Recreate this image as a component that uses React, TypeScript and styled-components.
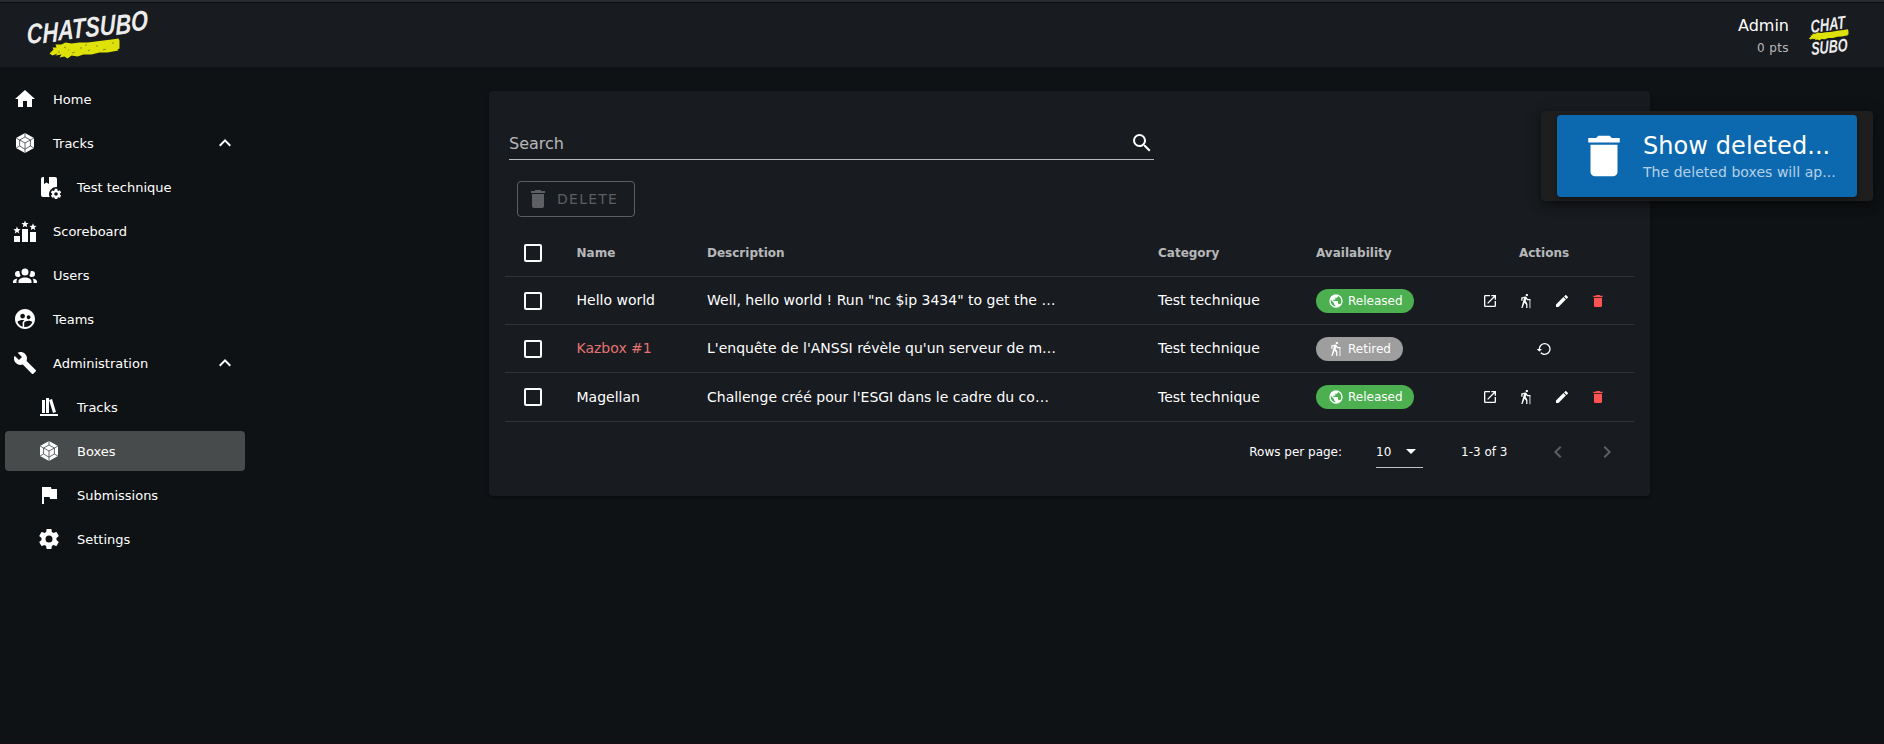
import React from "react";
import styled, { createGlobalStyle } from "styled-components";
import { MdSupervisedUserCircle } from "react-icons/md";

const GlobalStyle = createGlobalStyle`
  * { box-sizing: border-box; }
  html, body { margin: 0; background: #0f1214; }
  body {
    font-family: "DejaVu Sans", sans-serif;
    color: #fff;
    overflow: hidden;
  }
  svg { display: block; flex: none; }
`;

const paths = {
  home: "M10,20V14H14V20H19V12H22L12,3L2,12H5V20H10Z",
  chevronUp: "M7.41,15.41L12,10.83L16.59,15.41L18,14L12,8L6,14L7.41,15.41Z",
  chevronLeft: "M15.41,16.58L10.83,12L15.41,7.41L14,6L8,12L14,18L15.41,16.58Z",
  chevronRight: "M8.59,16.58L13.17,12L8.59,7.41L10,6L16,12L10,18L8.59,16.58Z",
  group:
    "M12,5.5A3.5,3.5 0 0,1 15.5,9A3.5,3.5 0 0,1 12,12.5A3.5,3.5 0 0,1 8.5,9A3.5,3.5 0 0,1 12,5.5M5,8C5.56,8 6.08,8.15 6.53,8.42C6.38,9.85 6.8,11.27 7.66,12.38C7.16,13.34 6.16,14 5,14A3,3 0 0,1 2,11A3,3 0 0,1 5,8M19,8A3,3 0 0,1 22,11A3,3 0 0,1 19,14C17.84,14 16.84,13.34 16.34,12.38C17.2,11.27 17.62,9.85 17.47,8.42C17.92,8.15 18.44,8 19,8M5.5,18.25C5.5,16.18 8.41,14.5 12,14.5C15.59,14.5 18.5,16.18 18.5,18.25V20H5.5V18.25M0,20V18.5C0,17.11 1.89,15.94 4.45,15.6C3.86,16.28 3.5,17.22 3.5,18.25V20H0M24,20H20.5V18.25C20.5,17.22 20.14,16.28 19.55,15.6C22.11,15.94 24,17.11 24,18.5V20Z",
  magnify:
    "M9.5,3A6.5,6.5 0 0,1 16,9.5C16,11.11 15.41,12.59 14.44,13.73L14.71,14H15.5L20.5,19L19,20.5L14,15.5V14.71L13.73,14.44C12.59,15.41 11.11,16 9.5,16A6.5,6.5 0 0,1 3,9.5A6.5,6.5 0 0,1 9.5,3M9.5,5C7,5 5,7 5,9.5C5,12 7,14 9.5,14C12,14 14,12 14,9.5C14,7 12,5 9.5,5Z",
  trash:
    "M19,4H15.5L14.5,3H9.5L8.5,4H5V6H19M6,19A2,2 0 0,0 8,21H16A2,2 0 0,0 18,19V7H6V19Z",
  checkbox:
    "M19,3H5C3.89,3 3,3.89 3,5V19A2,2 0 0,0 5,21H19A2,2 0 0,0 21,19V5C21,3.89 20.1,3 19,3M19,5V19H5V5H19Z",
  open:
    "M14,3V5H17.59L7.76,14.83L9.17,16.24L19,6.41V10H21V3M19,19H5V5H12V3H5C3.89,3 3,3.9 3,5V19A2,2 0 0,0 5,21H19A2,2 0 0,0 21,19V12H19V19Z",
  pencil:
    "M20.71,7.04C21.1,6.65 21.1,6 20.71,5.63L18.37,3.29C18,2.9 17.35,2.9 16.96,3.29L15.12,5.12L18.87,8.87M3,17.25V21H6.75L17.81,9.93L14.06,6.18L3,17.25Z",
  earth:
    "M17.9,17.39C17.64,16.59 16.89,16 16,16H15V13A1,1 0 0,0 14,12H8V10H10A1,1 0 0,0 11,9V7H13A2,2 0 0,0 15,5V4.59C17.93,5.77 20,8.64 20,12C20,14.08 19.2,15.97 17.9,17.39M11,19.93C7.05,19.44 4,16.08 4,12C4,11.38 4.08,10.78 4.21,10.21L9,15V16A2,2 0 0,0 11,18M12,2A10,10 0 0,0 2,12A10,10 0 0,0 12,22A10,10 0 0,0 22,12A10,10 0 0,0 12,2Z",
  flag: "M14.4,6L14,4H5V21H7V14H12.6L13,16H20V6H14.4Z",
  cog:
    "M12,15.5A3.5,3.5 0 0,1 8.5,12A3.5,3.5 0 0,1 12,8.5A3.5,3.5 0 0,1 15.5,12A3.5,3.5 0 0,1 12,15.5M19.43,12.97C19.47,12.65 19.5,12.33 19.5,12C19.5,11.67 19.47,11.34 19.43,11L21.54,9.37C21.73,9.22 21.78,8.95 21.66,8.73L19.66,5.27C19.54,5.05 19.27,4.96 19.05,5.05L16.56,6.05C16.04,5.66 15.5,5.32 14.87,5.07L14.5,2.42C14.46,2.18 14.25,2 14,2H10C9.75,2 9.54,2.18 9.5,2.42L9.13,5.07C8.5,5.32 7.96,5.66 7.44,6.05L4.95,5.05C4.73,4.96 4.46,5.05 4.34,5.27L2.34,8.73C2.21,8.95 2.27,9.22 2.46,9.37L4.57,11C4.53,11.34 4.5,11.67 4.5,12C4.5,12.33 4.53,12.65 4.57,12.97L2.46,14.63C2.27,14.78 2.21,15.05 2.34,15.27L4.34,18.73C4.46,18.95 4.73,19.03 4.95,18.95L7.44,17.94C7.96,18.34 8.5,18.68 9.13,18.93L9.5,21.58C9.54,21.82 9.75,22 10,22H14C14.25,22 14.46,21.82 14.5,21.58L14.87,18.93C15.5,18.67 16.04,18.34 16.56,17.94L19.05,18.95C19.27,19.03 19.54,18.95 19.66,18.73L21.66,15.27C21.78,15.05 21.73,14.78 21.54,14.63L19.43,12.97Z",
  shelf: "M9,3V18H12V3H9M12,5L16,18L19,17L15,4L12,5M5,5V18H8V5H5M3,19V21H21V19H3Z",
  wrench:
    "M22.7,19L13.6,9.9C14.5,7.6 14,4.9 12.1,3C10.1,1 7.1,0.6 4.7,1.7L9,6L6,9L1.6,4.7C0.4,7.1 0.9,10.1 2.9,12.1C4.8,14 7.5,14.5 9.8,13.6L18.9,22.7C19.3,23.1 19.9,23.1 20.3,22.7L22.6,20.4C23.1,20 23.1,19.3 22.7,19Z",
  restore:
    "M13,3A9,9 0 0,0 4,12H1L4.89,15.89L4.96,16.03L9,12H6A7,7 0 0,1 13,5A7,7 0 0,1 20,12A7,7 0 0,1 13,19C11.07,19 9.32,18.21 8.06,16.94L6.64,18.36C8.27,20 10.5,21 13,21A9,9 0 0,0 22,12A9,9 0 0,0 13,3Z",
  menuDown: "M7,10L12,15L17,10H7Z",
};

function Icon({ name, size = 24 }: { name: keyof typeof paths; size?: number }) {
  return (
    <svg width={size} height={size} viewBox="0 0 24 24" fill="currentColor">
      <path d={paths[name]} />
    </svg>
  );
}

function CaneIcon() {
  return (
    <svg width="16" height="16" viewBox="0 0 24 24" fill="currentColor">
      <g transform="translate(-1.4 1.2) scale(1.05 0.96)">
        <path d="M14.12,10H19V8.2H15.38L13.38,4.87C13.08,4.37 12.54,4.03 11.92,4.03C11.74,4.03 11.58,4.06 11.42,4.11L6,5.8V11H7.8V7.33L9.91,6.67L6,22H7.8L10.67,13.89L13,17V22H14.8V15.59L12.31,11.05L13.04,8.18M14,3.8C15,3.8 15.8,3 15.8,2C15.8,1 15,0.2 14,0.2C13,0.2 12.2,1 12.2,2C12.2,3 13,3.8 14,3.8Z" />
        <path d="M17.8,9H19V22.5H17.8Z" />
      </g>
    </svg>
  );
}

function BoxIcon() {
  return (
    <svg width="24" height="24" viewBox="0 0 24 24">
      <path d="M12,2L21,7V17L12,22L3,17V7Z" fill="#fff" />
      <path
        d="M12,6L17.4,9V15L12,18.2L6.6,15V9ZM12,12V18.2M12,12L6.6,9M12,12L17.4,9M12,2V6M12,18.2V22M3,7L6.6,9M17.4,9L21,7M3,17L6.6,15M17.4,15L21,17"
        fill="none"
        stroke="#3f4244"
        strokeWidth="0.8"
      />
    </svg>
  );
}

function BookCogIcon() {
  return (
    <svg width="24" height="24" viewBox="0 0 24 24">
      <path
        d="M6,2H7V9L9.5,7.5L12,9V2H18A2,2 0 0,1 20,4V12.1A7,7 0 0,0 12.7,22H6A2,2 0 0,1 4,20V4A2,2 0 0,1 6,2Z"
        fill="#fff"
      />
      <g transform="translate(12.8 12.8) scale(0.52)">
        <path d={paths.cog} fill="#fff" />
      </g>
    </svg>
  );
}

const star = "M0,-3.7L1,-1.3L3.6,-1.1L1.6,0.6L2.2,3.1L0,1.7L-2.2,3.1L-1.6,0.6L-3.6,-1.1L-1,-1.3Z";

function PodiumIcon() {
  return (
    <svg width="24" height="24" viewBox="0 0 24 24" fill="#fff">
      <path d="M1,17H7V23H1ZM9,10H15V23H9ZM17,13H23V23H17Z" />
      <path d={star} transform="translate(4 11.3)" />
      <path d={star} transform="translate(12 5.2)" />
      <path d={star} transform="translate(20 8)" />
    </svg>
  );
}

const LogoText = styled.text`
  font-family: "Liberation Sans Narrow", "Liberation Sans", sans-serif;
  font-style: italic;
  font-weight: 700;
  fill: #ececec;
`;

const brush =
  "M0,13L4,9L3,7L7,7L6,4L12,4L16,2L22,3L30,2L38,2L46,1L54,0L62,-1L69,-2L70,0L70,8L68,9L69,10L58,12L50,12L42,14L34,14L28,16L22,15L18,18L15,16L10,17L12,14L6,15L8,13L3,15Z";

function Logo() {
  return (
    <svg width="140" height="64" viewBox="-4 -7 140 64">
      <path d={brush} transform="translate(21.5 31.5)" fill="#dfe208" />
      <path
        d="M30,43l2,0M36,38l2,1M44,44l3,-1M52,39l2,0M60,42l2,-1M68,37l2,0M75,41l3,-1M84,34l2,0M40,41l1,0M57,36l2,0"
        stroke="#8c8f10"
        strokeWidth="1"
      />
      <LogoText
        transform="translate(-1 35) rotate(-6.5) skewX(-5)"
        fontSize="28"
        textLength="122"
        lengthAdjust="spacingAndGlyphs"
        dy="0 1 -1 0 0 0 1 -1.5"
      >
        CHATSUBO
      </LogoText>
    </svg>
  );
}

function Avatar() {
  return (
    <svg width="56" height="65" viewBox="0 -7 56 65">
      <LogoText transform="translate(7 24) rotate(-8) skewX(-4)" fontSize="18" textLength="35" lengthAdjust="spacingAndGlyphs">
        CHAT
      </LogoText>
      <path d={brush} transform="translate(4.5 23) scale(0.57 0.5) rotate(-3)" fill="#dfe208" />
      <LogoText transform="translate(7.5 46) rotate(-6.5) skewX(-4)" fontSize="18" textLength="36.5" lengthAdjust="spacingAndGlyphs">
        SUBO
      </LogoText>
    </svg>
  );
}

const Page = styled.div`
  height: 744px;
  display: flex;
  flex-direction: column;
  border-bottom: 1px solid #150d12;
`;

const Header = styled.header`
  flex: none;
  height: 67px;
  border-top: 2px solid #2a2a33;
  background: #181b1f;
  box-shadow: inset 0 1px 0 #0c0d0f;
  display: flex;
  justify-content: space-between;
  padding: 0 24px;
`;

const Account = styled.div`
  display: flex;
  align-items: flex-start;
  gap: 15px;
  text-align: right;
`;

const AccountName = styled.div`
  margin-top: 12px;
  font-size: 16px;
  line-height: 24px;
`;

const AccountScore = styled.div`
  font-size: 12px;
  line-height: 20px;
  letter-spacing: 0.4px;
  color: rgba(255, 255, 255, 0.7);
`;

const Body = styled.div`
  flex: 1;
  display: flex;
`;

const Sidebar = styled.nav`
  width: 250px;
  padding: 12px 5px;
  display: flex;
  flex-direction: column;
  gap: 4px;
`;

const NavItem = styled.a<{ $sub?: boolean; $active?: boolean }>`
  height: 40px;
  border-radius: 4px;
  padding: 0 8px 0 ${(p) => (p.$sub ? 32 : 8)}px;
  display: flex;
  align-items: center;
  gap: 16px;
  font-size: 13px;
  color: #fff;
  background: ${(p) => (p.$active ? "#484b4c" : "transparent")};
`;

const NavLabel = styled.span`
  flex: 1;
`;

const Main = styled.main`
  flex: 1;
  padding: 24px 0 0 239px;
`;

const Card = styled.section`
  width: 1161px;
  height: 405px;
  padding: 32px 16px 0;
  border-radius: 4px;
  background: #181b1f;
  box-shadow: 0 2px 3px rgba(0, 0, 0, 0.35);
`;

const SearchField = styled.div`
  width: 645px;
  height: 37px;
  margin-left: 4px;
  padding-top: 4px;
  border-bottom: 1px solid rgba(255, 255, 255, 0.7);
  display: flex;
  align-items: center;
  justify-content: space-between;
  font-size: 16px;
  color: rgba(255, 255, 255, 0.7);
  svg { color: #fff; }
`;

const DeleteButton = styled.button`
  display: flex;
  align-items: center;
  gap: 7px;
  width: 118px;
  height: 36px;
  margin: 21px 0 12px 12px;
  padding: 0 8px;
  border: 1px solid #5d5f62;
  border-radius: 4px;
  background: transparent;
  font-family: inherit;
  font-size: 14px;
  letter-spacing: 1.25px;
  color: #5d5f62;
`;

const Row = styled.div<{ $last?: boolean }>`
  height: ${(p) => (p.$last ? 49 : 48)}px;
  border-bottom: 1px solid #323538;
  display: grid;
  grid-template-columns: 71.5px 130.5px 451px 158px 138px 180px;
  align-items: center;
  font-size: 14px;
  > span { padding-bottom: ${(p) => (p.$last ? 0 : 2)}px; }
`;

const HeadRow = styled(Row)`
  font-size: 12px;
  font-weight: 700;
  color: rgba(255, 255, 255, 0.7);
  > span { padding-bottom: 0; }
`;

const CheckCell = styled.div`
  padding-left: 15.5px;
  color: #fff;
`;

const Name = styled.span<{ $deleted?: boolean }>`
  color: ${(p) => (p.$deleted ? "#e57373" : "inherit")};
`;

const Chip = styled.div<{ $retired?: boolean }>`
  display: flex;
  width: fit-content;
  align-items: center;
  gap: 4px;
  height: 24px;
  padding: 0 ${(p) => (p.$retired ? 12 : 11.5)}px 0 12px;
  border-radius: 12px;
  font-size: 12px;
  background: ${(p) => (p.$retired ? "#9e9e9e" : "#4caf50")};
`;

const ActionsHead = styled.div`
  text-align: center;
`;

const Actions = styled.div`
  display: flex;
  justify-content: center;
  padding-right: 1px;
`;

const ActionButton = styled.div<{ $danger?: boolean }>`
  width: 36px;
  display: flex;
  justify-content: center;
  color: ${(p) => (p.$danger ? "#ff5252" : "#fff")};
`;

const Footer = styled.div`
  height: 59px;
  padding-right: 15px;
  display: flex;
  align-items: center;
  justify-content: flex-end;
  font-size: 12px;
`;

const PageSize = styled.div`
  width: 47px;
  height: 33px;
  margin: 0 38px 0 34px;
  border-bottom: 1px solid #c0c1c2;
  display: flex;
  align-items: center;
  justify-content: space-between;
  > span { padding-top: 2px; }
`;

const Pager = styled.div`
  display: flex;
  gap: 25.5px;
  margin-left: 38px;
  color: #5d5f62;
`;

const Snackbar = styled.aside`
  position: absolute;
  top: 111px;
  right: 11px;
  width: 332px;
  height: 90px;
  padding: 4px 16px;
  border-radius: 4px;
  background: #1e1e1e;
  box-shadow: 0 3px 5px -1px rgba(0, 0, 0, 0.2), 0 6px 10px rgba(0, 0, 0, 0.2),
    0 1px 18px rgba(0, 0, 0, 0.15);
`;

const SnackbarContent = styled.div`
  height: 82px;
  padding: 0 18px 0 20px;
  border-radius: 4px;
  background: #0c69b0;
  box-shadow: 0 2px 4px rgba(0, 0, 0, 0.35);
  display: flex;
  align-items: center;
  gap: 12px;
`;

const SnackbarTitle = styled.div`
  font-size: 24px;
  line-height: 32px;
  letter-spacing: 0.08px;
  white-space: nowrap;
`;

const SnackbarText = styled.div`
  font-size: 14px;
  line-height: 20px;
  letter-spacing: 0.04px;
  white-space: nowrap;
  color: rgba(255, 255, 255, 0.7);
`;

const boxes = [
  { name: "Hello world", description: 'Well, hello world ! Run "nc $ip 3434" to get the …', retired: false },
  { name: "Kazbox #1", description: "L'enquête de l'ANSSI révèle qu'un serveur de m…", retired: true },
  { name: "Magellan", description: "Challenge créé pour l'ESGI dans le cadre du co…", retired: false },
];

export default function App() {
  return (
    <Page>
      <GlobalStyle />
      <Header>
        <Logo />
        <Account>
          <div>
            <AccountName>Admin</AccountName>
            <AccountScore>0 pts</AccountScore>
          </div>
          <Avatar />
        </Account>
      </Header>
      <Body>
        <Sidebar>
          <NavItem><Icon name="home" /><NavLabel>Home</NavLabel></NavItem>
          <NavItem><BoxIcon /><NavLabel>Tracks</NavLabel><Icon name="chevronUp" /></NavItem>
          <NavItem $sub><BookCogIcon /><NavLabel>Test technique</NavLabel></NavItem>
          <NavItem><PodiumIcon /><NavLabel>Scoreboard</NavLabel></NavItem>
          <NavItem><Icon name="group" /><NavLabel>Users</NavLabel></NavItem>
          <NavItem><MdSupervisedUserCircle size={24} /><NavLabel>Teams</NavLabel></NavItem>
          <NavItem><Icon name="wrench" /><NavLabel>Administration</NavLabel><Icon name="chevronUp" /></NavItem>
          <NavItem $sub><Icon name="shelf" /><NavLabel>Tracks</NavLabel></NavItem>
          <NavItem $sub $active><BoxIcon /><NavLabel>Boxes</NavLabel></NavItem>
          <NavItem $sub><Icon name="flag" /><NavLabel>Submissions</NavLabel></NavItem>
          <NavItem $sub><Icon name="cog" /><NavLabel>Settings</NavLabel></NavItem>
        </Sidebar>
        <Main>
          <Card>
            <SearchField>Search<Icon name="magnify" /></SearchField>
            <DeleteButton disabled><Icon name="trash" />DELETE</DeleteButton>
            <HeadRow>
              <CheckCell><Icon name="checkbox" /></CheckCell>
              <span>Name</span>
              <span>Description</span>
              <span>Category</span>
              <span>Availability</span>
              <ActionsHead>Actions</ActionsHead>
            </HeadRow>
            {boxes.map((box, i) => (
              <Row key={box.name} $last={i === boxes.length - 1}>
                <CheckCell><Icon name="checkbox" /></CheckCell>
                <Name $deleted={box.retired}>{box.name}</Name>
                <span>{box.description}</span>
                <span>Test technique</span>
                <Chip $retired={box.retired}>
                  {box.retired ? <CaneIcon /> : <Icon name="earth" size={16} />}
                  {box.retired ? "Retired" : "Released"}
                </Chip>
                <Actions>
                  {box.retired ? (
                    <ActionButton><Icon name="restore" size={16} /></ActionButton>
                  ) : (
                    <>
                      <ActionButton><Icon name="open" size={16} /></ActionButton>
                      <ActionButton><CaneIcon /></ActionButton>
                      <ActionButton><Icon name="pencil" size={16} /></ActionButton>
                      <ActionButton $danger><Icon name="trash" size={16} /></ActionButton>
                    </>
                  )}
                </Actions>
              </Row>
            ))}
            <Footer>
              <span>Rows per page:</span>
              <PageSize><span>10</span><Icon name="menuDown" /></PageSize>
              <span>1-3 of 3</span>
              <Pager>
                <Icon name="chevronLeft" />
                <Icon name="chevronRight" />
              </Pager>
            </Footer>
          </Card>
        </Main>
      </Body>
      <Snackbar>
        <SnackbarContent>
          <Icon name="trash" size={54} />
          <div>
            <SnackbarTitle>Show deleted...</SnackbarTitle>
            <SnackbarText>The deleted boxes will ap...</SnackbarText>
          </div>
        </SnackbarContent>
      </Snackbar>
    </Page>
  );
}
